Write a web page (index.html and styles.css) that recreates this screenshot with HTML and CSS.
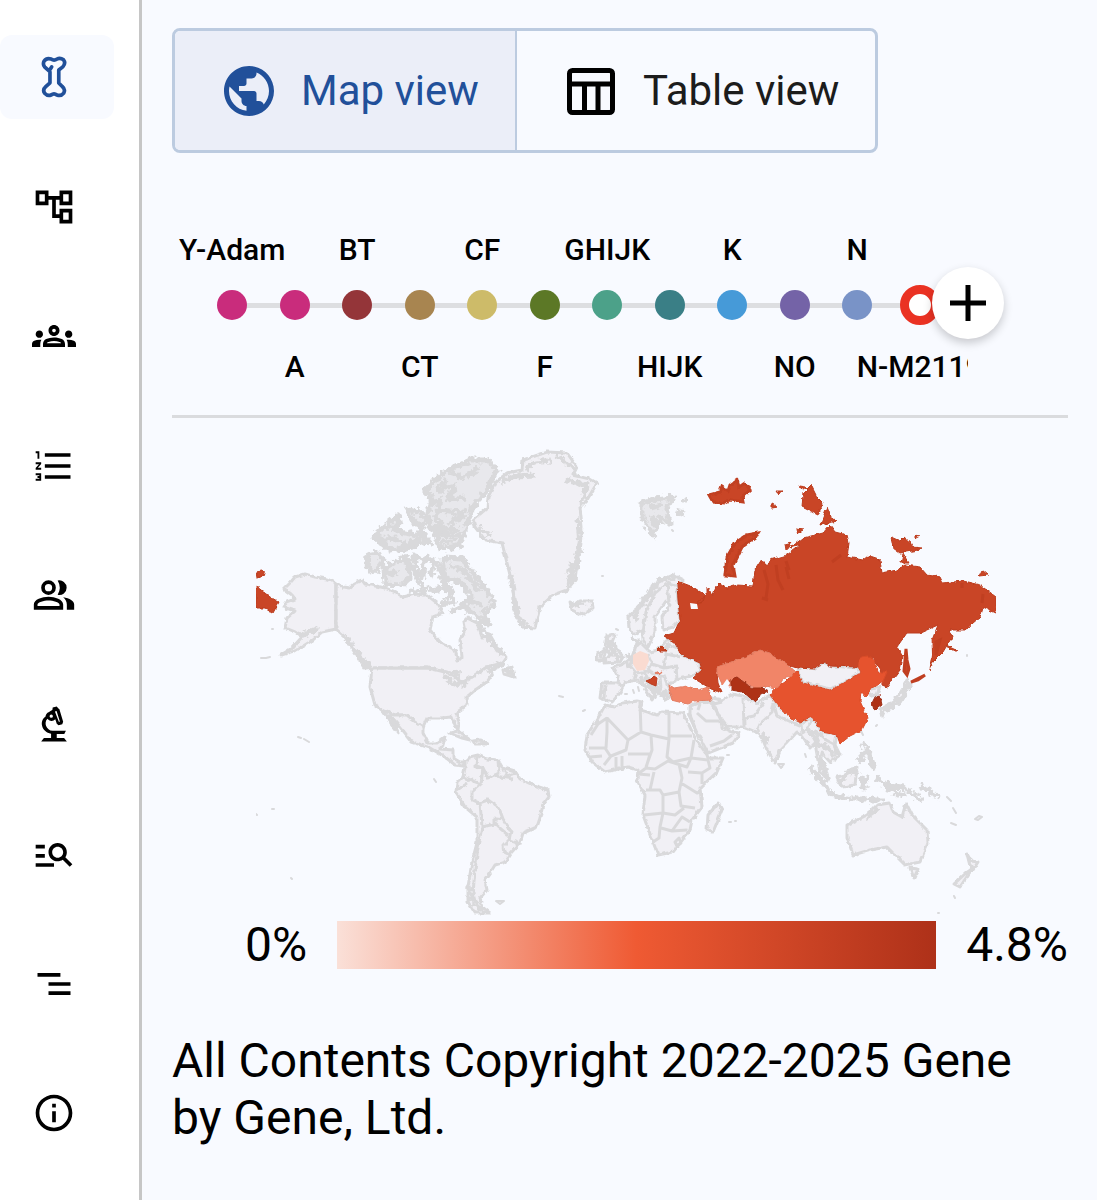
FILE: index.html
```html
<!DOCTYPE html>
<html lang="en">
<head>
<meta charset="utf-8">
<meta name="viewport" content="width=device-width, initial-scale=1">
<title>Haplogroup map</title>
<link rel="stylesheet" href="styles.css">
</head>
<body>
<div class="app">
  <nav class="rail" aria-label="Sections">
    <a class="rail-link active" href="#ancient" aria-label="Ancient connections" aria-current="page">
      <svg class="icon" viewBox="0 0 24 24" fill="none" stroke="currentColor" stroke-width="2" stroke-linejoin="round" stroke-linecap="round"><path d="M9.800 9.200V15.200L7.500 17.300Q5.600 19 6.900 20.900Q8.500 22.600 10.400 21.800Q12 20.500 13.600 21.800Q15.900 22.600 17.300 20.800Q18.400 18.700 16.500 17.200L14.600 15.300V8.200L16.800 6.500Q18.600 4.400 17.200 2.600Q15.300 1.200 13.700 2.200Q12 3.300 10.400 2.200Q8 1.400 6.600 3.300Q5.700 5.300 7 6.600L9.300 8.700 10.700 6.500"/></svg>
    </a>
    <a class="rail-link" href="#tree" aria-label="Tree">
      <svg class="icon" viewBox="0 0 24 24"><path d="M22 11V3h-7v3H9V3H2v8h7V8h2v10h4v3h7v-8h-7v3h-2V8h2v3h7zM7 9H4V5h3v4zm10 6h3v4h-3v-4zm0-10h3v4h-3V5z"/></svg>
    </a>
    <a class="rail-link" href="#groups" aria-label="Group projects">
      <svg class="icon" viewBox="0 0 24 24"><path d="M4 13c1.100 0 2-.9 2-2s-.9-2-2-2-2 .9-2 2 .9 2 2 2zm1.130 1.100C4.760 14.040 4.390 14 4 14c-.99 0-1.930.21-2.780.58C.48 14.900 0 15.620 0 16.430V18h4.500v-1.610c0-.83.23-1.610.63-2.290zM20 13c1.100 0 2-.9 2-2s-.9-2-2-2-2 .9-2 2 .9 2 2 2zm4 3.430c0-.81-.48-1.530-1.220-1.850-.85-.37-1.790-.58-2.780-.58-.39 0-.76.04-1.130.1.400.68.630 1.460.63 2.290V18H24v-1.570zM16.240 13.650c-1.170-.52-2.610-.9-4.240-.9s-3.070.39-4.240.9C6.680 14.130 6 15.210 6 16.390V18h12v-1.610c0-1.180-.68-2.260-1.760-2.740zM8.070 16c.09-.23.13-.39.91-.69.97-.38 1.990-.56 3.020-.56s2.050.18 3.020.56c.77.3.81.46.91.69H8.070zM12 8c.55 0 1 .45 1 1s-.45 1-1 1-1-.45-1-1 .45-1 1-1m0-2c-1.660 0-3 1.340-3 3s1.340 3 3 3 3-1.340 3-3-1.340-3-3-3z"/></svg>
    </a>
    <a class="rail-link" href="#list" aria-label="Ancestral path">
      <svg class="icon" viewBox="0 0 24 24"><path d="M2 17h2v.5H3v1h1v.5H2v1h3v-4H2v1zm1-9h1V4H2v1h1v3zm-1 3h1.800L2 13.100v.9h3v-1H3.200L5 10.900V10H2v1zm5-6v2h14V5H7zm0 14h14v-2H7v2zm0-6h14v-2H7v2z"/></svg>
    </a>
    <a class="rail-link" href="#people" aria-label="Notable connections">
      <svg class="icon" viewBox="0 0 24 24"><path fill-rule="evenodd" d="M9 12a4 4 0 1 0 0-8 4 4 0 0 0 0 8zm0-2a2 2 0 1 1 0-4 2 2 0 0 1 0 4zM1 20v-2.800C1 14.500 5.500 13 9 13s8 1.500 8 4.200V20zm2-2h12v-.8C15 16 11.500 15 9 15s-6 1-6 2.200zM14 11.900Q16.300 8 14 4.100a4 4 0 1 1 0 7.800zM17 13.200c3.600.5 6 2 6 4V20h-4v-2.800c0-1.700-.8-3-2-4z"/></svg>
    </a>
    <a class="rail-link" href="#science" aria-label="Scientific details">
      <svg class="icon" viewBox="0 0 24 24"><path fill-rule="evenodd" d="M10.300 4.200 11.100 3.800 11.300 2.500 13.500 1.900 14.400 3 14.900 3.300 17 10.200 16.500 11.600 14.500 12.100 13.500 11.300 12.700 8.900A2.700 2.700 0 0 1 8.400 8.600C6.300 10.700 7.700 15 11.300 15.200H18.500L17.600 16.900H13.500V19.100H17.500L19 21H5L6.500 19.100H10.400V16.800C5.400 16 3.600 10 7.400 7.400Q7.400 5.700 9.300 4.900zM10.500 6.300a.9.900 0 1 0 0 1.800.9.900 0 0 0 0-1.800zM12.500 4.600 14.700 10.300 15.200 10.100 13.400 4.300z"/></svg>
    </a>
    <a class="rail-link" href="#search" aria-label="Search details">
      <svg class="icon" viewBox="0 0 24 24"><path d="M7 9H2V7h5v2zm0 3H2v2h5v-2zm13.590 7l-3.830-3.830c-.8.520-1.740.83-2.760.83-2.760 0-5-2.240-5-5s2.240-5 5-5 5 2.240 5 5c0 1.020-.31 1.960-.83 2.750L22 17.590 20.590 19zM17 11c0-1.650-1.350-3-3-3s-3 1.350-3 3 1.350 3 3 3 3-1.350 3-3zM2 19h10v-2H2v2z"/></svg>
    </a>
    <a class="rail-link" href="#timeline" aria-label="Time tree">
      <svg class="icon" viewBox="0 0 24 24"><path d="M3 6h12.500v2H3zM9 11h12v2H9zM9 16h12v2H9z"/></svg>
    </a>
    <a class="rail-link" href="#about" aria-label="About">
      <svg class="icon" viewBox="0 0 24 24"><path d="M11 7h2v2h-2zm0 4h2v6h-2zm1-9C6.480 2 2 6.480 2 12s4.480 10 10 10 10-4.480 10-10S17.520 2 12 2zm0 18c-4.410 0-8-3.590-8-8s3.590-8 8-8 8 3.590 8 8-3.590 8-8 8z"/></svg>
    </a>
  </nav>

  <main class="content">
    <div class="view-toggle" role="group" aria-label="View">
      <button class="view-button selected" type="button" aria-pressed="true">
        <svg class="view-icon" viewBox="0 0 24 24"><path d="M12 2C6.480 2 2 6.480 2 12s4.480 10 10 10 10-4.480 10-10S17.520 2 12 2zm-1 17.930c-3.950-.49-7-3.850-7-7.930 0-.62.08-1.210.21-1.790L9 15v1c0 1.100.9 2 2 2v1.930zm6.900-2.540c-.26-.81-1-1.390-1.900-1.390h-1v-3c0-.55-.45-1-1-1H8v-2h2c.55 0 1-.45 1-1V7h2c1.100 0 2-.9 2-2v-.41c2.930 1.190 5 4.060 5 7.410 0 2.080-.8 3.970-2.100 5.390z"/></svg>
        Map view
      </button>
      <button class="view-button" type="button" aria-pressed="false">
        <svg class="view-icon" viewBox="0 0 60 60" fill="none" stroke="#000" stroke-width="5"><rect x="8.500" y="9.500" width="43" height="42" rx="3"/><path d="M8 23h44M23.500 23v28M37 23v28"/></svg>
        Table view
      </button>
    </div>

    <section class="path" aria-label="Haplogroup path">
      <ol class="steps">
        <li class="step"><span class="label">Y-Adam</span><span class="dot" style="background:#c92c7c"></span></li>
        <li class="step below"><span class="label">A</span><span class="dot" style="background:#c92c7c"></span></li>
        <li class="step"><span class="label">BT</span><span class="dot" style="background:#943539"></span></li>
        <li class="step below"><span class="label">CT</span><span class="dot" style="background:#a88550"></span></li>
        <li class="step"><span class="label">CF</span><span class="dot" style="background:#cdbb69"></span></li>
        <li class="step below"><span class="label">F</span><span class="dot" style="background:#5c7826"></span></li>
        <li class="step"><span class="label">GHIJK</span><span class="dot" style="background:#4ca189"></span></li>
        <li class="step below"><span class="label">HIJK</span><span class="dot" style="background:#3a7f86"></span></li>
        <li class="step"><span class="label">K</span><span class="dot" style="background:#469ad8"></span></li>
        <li class="step below"><span class="label">NO</span><span class="dot" style="background:#7463a7"></span></li>
        <li class="step"><span class="label">N</span><span class="dot" style="background:#7993c7"></span></li>
        <li class="step below"><span class="label">N-M2119</span><span class="dot current"></span></li>
      </ol>
      <button class="add" type="button" aria-label="Add haplogroup">
        <svg class="add-icon" viewBox="0 0 38 38" stroke="#000" stroke-width="5"><path d="M19 1v36M1 19h36"/></svg>
      </button>
    </section>

    <section class="chart">
      <svg class="map" viewBox="256 448 740 468" role="img" aria-label="World map of haplogroup frequency">
        <defs>
          <filter id="coast" x="-5%" y="-5%" width="110%" height="110%">
            <feTurbulence type="fractalNoise" baseFrequency="0.22" numOctaves="2" seed="4"/>
            <feDisplacementMap in="SourceGraphic" scale="9" xChannelSelector="R" yChannelSelector="G"/>
          </filter>
          <filter id="shore" x="-5%" y="-5%" width="110%" height="110%">
            <feTurbulence type="fractalNoise" baseFrequency="0.2" numOctaves="2" seed="8"/>
            <feDisplacementMap in="SourceGraphic" scale="4" xChannelSelector="R" yChannelSelector="G"/>
          </filter>
        </defs>

        <g class="land" filter="url(#shore)">
          <!-- Alaska -->
          <path d="M336 583L327 579 315 577 305 574 295 577 290 583 284 589 292 595 295 599 287 602 283 607 295 611 287 618 285 628 295 632 302 637 292 648 281 655 295 651 313 640 322 632 336 629z"/>
          <!-- Canada -->
          <path d="M336 583L343 587 349 588 355 583 362 580 365 584 372 585 385 588 395 592 403 597 415 594 427 595 437 603 443 613 433 617 430 630 440 642 455 650 458 661 462 657 460 640 465 632 463 622 467 618 477 623 482 637 490 635 497 647 507 657 503 663 487 667 475 675 462 683 449 673 428 668H374L366 669 355 653 345 637 336 629z"/>
          <!-- United States -->
          <path d="M372 668H428L449 673 462 683 475 675 487 667 493 673 487 682 475 690 467 697 467 705 456 713 459 722 458 730 455 725 452 717 440 718 427 718 423 727 413 720 407 715 395 715 383 711 375 705 370 687z"/>
          <!-- Mexico and Central America -->
          <path d="M383 711L395 715 407 715 413 720 423 727 423 733 428 743 437 743 445 737 443 745 440 749 453 750 453 758 460 762 465 762 463 766 455 765 445 757 430 748 412 742 405 733 396 722 390 715 398 733 392 725z"/>
          <path d="M450 733L458 731 470 740 462 738zM473 741L480 740 487 744 475 744zM503 670L512 667 514 677 504 674z"/>
          <!-- South America -->
          <path d="M465 762L470 757 478 755 487 759 498 760 502 767 515 771 520 779 533 785 548 790 549 797 543 805 540 818 537 827 523 833 520 843 510 854 505 862 495 865 490 873 485 880 487 890 480 898 482 907 490 913 475 913 468 902 468 887 472 862 477 843 477 817 465 807 456 792 457 783 463 777 465 767z"/>
          <path class="line" d="M477 756L476 766 483 768 481 784 463 777M457 790L468 783M481 784L472 792 472 800 479 803 488 800 499 808 503 819 511 831 509 840 520 844M480 803L482 827 478 847 475 870 473 893 476 904M482 827L495 824 495 818 504 819M495 824L508 835M509 840L503 846 504 852 510 855M483 768L488 778 499 773 498 760M503 767L507 776 516 773M495 776L513 779"/>
          <!-- Greenland -->
          <path d="M473 520L487 508 488 497 495 483 507 473 522 470 523 460 547 452 567 453 577 467 573 475 590 479 597 483 587 500 580 507 582 527 580 543 577 563 575 580 567 590 553 595 540 607 535 628 523 627 515 613 513 587 508 567 502 543 485 540 475 527z"/>
          <path d="M570 602L575 605 580 601 592 601 593 608 582 615 572 610z"/>
          <!-- Western Europe -->
          <path d="M613 667L621 665 632 657 638 640 643 645 650 652 658 650 667 640 675 640 682 655 700 663 700 672 687 677 677 680 668 685 670 697 665 700 660 690 652 683 645 677 653 688 655 695 652 700 645 688 638 680 625 682 620 693 612 702 600 698 602 683 617 683 618 677z"/>
          <path class="line" d="M617 683L625 686M605 685L604 698M632 657L630 666 636 673 634 679M636 673L648 671 652 664 648 654M652 664L664 668 666 654 680 657M664 668L676 666 677 680M655 674L664 676 668 686M648 671L655 674M664 650L668 644 677 648M668 645L666 654M643 671L650 681 660 684M660 676L661 690M628 668L627 662M640 676L646 688"/>
          <!-- Scandinavia -->
          <path d="M628 617L642 605 652 587 662 580 673 575 683 580 677 590 680 620 673 627 663 630 662 617 670 605 666 601 655 617 655 632 648 647 643 640 642 630 633 635 629 627z"/>
          <path class="line" d="M643 632L646 612 655 593 667 583M667 583L669 602M667 583L678 587"/>
          <path d="M607 635L615 635 612 642 623 657 620 662 603 663 610 655 605 647zM598 653L606 650 603 660 597 660z"/>
          <!-- Africa -->
          <path d="M605 705L615 707 622 703 637 701 642 702 640 710 657 715 662 712 683 713 688 723 695 738 707 755 708 758 723 758 717 772 700 788 702 807 692 820 690 830 680 843 673 852 658 855 653 842 643 815 645 795 637 780 638 770 628 767 605 772 592 762 585 750 587 735 598 718z"/>
          <!-- Arabia -->
          <path d="M690 706L698 703 712 702 720 716 722 727 732 732 740 733 733 743 708 753 697 733 690 715z"/>
          <!-- Iran to Indochina -->
          <path d="M708 697L722 700 732 694 743 696 757 703 770 695 780 708 800 722 812 717 822 732 837 734 835 745 840 755 830 762 822 753 820 762 828 779 820 772 815 743 810 748 803 737 797 732 787 743 780 750 775 763 767 750 763 740 758 733 743 727 727 727 720 718 712 702z"/>
          <path class="line" d="M743 698L744 726M744 718L754 716 764 702M757 731L761 722 772 712 774 703M774 705L777 716 800 726 805 720M802 724L803 734M812 718L808 728 816 742M818 733L826 740 834 744 836 753M820 745L830 748M780 765L782 768"/>
          <!-- Mongolia, Korea, Japan -->
          <path d="M797 670L803 667 815 669 823 662 830 666 858 668 860 672 843 683 830 689 803 682z"/>
          <path d="M868 690L880 687 877 695 871 696z"/>
          <path d="M907 680L911 685 905 690 905 697 895 705 885 709 882 717 880 709 893 702 901 692z"/>
          <!-- Oceania -->
          <path d="M847 825L867 815 877 805 890 803 893 812 902 817 906 803 912 815 927 830 928 843 920 862 905 865 897 857 887 847 870 850 853 855 847 837zM910 868L918 869 914 878z"/>
          <path d="M967 854L971 861 978 862 973 870 970 866zM972 869L960 887 954 884 966 873z"/>
          <path d="M718 803L722 810 713 832 707 830 708 815z"/>
          <path d="M837 777L845 775 857 767 855 785 842 787z"/>
        </g>

        <path class="line" d="M336 583V629M378 668H430"/>
        <path class="line" d="M688 713L697 733M607 718L598 724 591 735M607 717V732L606 748 589 748M607 718L628 740 641 732 640 702M628 740L626 750 611 756 604 765M641 732L651 735 669 739V713M670 736H692M669 739L667 757 673 762 691 758 694 740M651 735L652 750 646 767M628 754L650 754 646 768 638 774M646 768L655 769 668 761 687 767 691 758M691 758L708 760 710 768 702 773 688 772M679 764L682 778 679 792 663 795 660 790H646M650 790L654 772M702 773L702 784M681 783L697 793 700 792M679 792L681 806 695 808M663 795V813L644 815M663 813L675 815 684 808M663 813L660 827 659 838 653 842M661 828L672 831 682 817 690 822M672 831L687 830M675 842L679 838 681 843 677 846zM605 748L611 757M590 757L602 756M616 757V770M622 756V768M638 774L650 775"/>
        <path class="line" d="M697 713L706 721 719 721M710 746L724 741 732 735M700 704L698 710M714 704L722 702"/>

        <!-- Arctic archipelago and other rugged islands -->
        <g class="rugged" filter="url(#coast)">
          <path d="M425 490L443 473 470 460 488 460 497 470 487 490 472 508 468 523 462 540 448 534 432 530 427 513 432 500z"/>
          <path class="trace" d="M435 490L455 485 448 500 465 498M438 510L460 512 450 525M450 470L462 478 480 468M428 505L440 500 436 520 446 530M446 478L440 492M458 522L466 510"/>
          <path d="M373 537L385 526 400 532 415 535 426 540 412 547 390 550zM388 523L398 515 400 524 392 528zM407 510L420 512 430 524 414 524zM435 535L460 536 460 546 440 548z"/>
          <path class="trace" d="M430 528L460 530M418 530L432 545M378 540L395 538 405 545 420 540M412 518L424 530M376 533L385 546M441 542L455 541"/>
          <path d="M368 555L378 553 384 561 374 573 367 567zM384 568L400 560 409 562 410 578 402 585 385 584zM443 558L462 559 475 575 492 598 494 605 484 612 488 624 476 616 462 606 472 596 460 582 445 578z"/>
          <path class="trace" d="M414 556L424 560 423 577 416 570zM426 556L434 562 430 578M438 562L442 580 452 590 446 600M430 590L445 588 455 602 440 604M409 590L425 592M450 565L465 572 480 592M386 575L398 572M412 564L420 584 428 590M404 556L412 562M470 600L482 606M462 606L450 612"/>
          <path class="trace" d="M345 637L355 650 370 668M300 636L318 628M487 672L505 662M443 675L455 685 466 683M388 715L398 730M505 668L512 675M448 672L460 674M478 622L490 640 502 655"/>
          <path d="M642 503L655 499 673 497 667 508 670 523 660 518 653 536 642 517z"/>
          <path class="trace" d="M675 511L684 513M682 500L688 500M650 508L662 505M652 515L656 526"/>
          <path class="trace" d="M633 622L638 608 650 592 660 580 675 577M511 575L514 600 520 620 528 627M578 520L580 545 573 578 567 588M525 470L535 462 550 460M500 482L515 476 535 475M566 480L588 486M469 885L472 900 484 911M572 562L568 582M586 486L582 505M478 528L492 536M556 456L575 468M575 604L585 603"/>
          <path class="trace" d="M810 768L818 776 832 795M832 795L850 799 873 799M838 784L848 773 858 770M860 777L870 779M862 779L866 788M863 742L868 752 874 770M865 752L858 762M822 760L828 782M875 778L887 785 903 787 913 794 923 801M885 790L905 795M920 785L932 793 940 797M822 745L836 757M806 730L822 735M870 800L885 800M866 818L878 808M812 770L826 786M815 735L820 748M888 785L900 796M864 782L862 790"/>
          <path class="trace" d="M607 636L613 652 620 661M626 655L636 662M652 683L664 698M633 637L640 645M606 645L616 644M600 655L604 655M885 710L898 703 905 694 907 683M645 678L655 692M664 690L668 700M762 732L768 744"/>
        </g>
        <path class="speck" d="M298 737l3 1zM304 739l5 3zM261 658l4 0zM266 658l4-1zM272 629l1 0zM256 814l1 1zM272 809l2 0zM291 878l1 1zM434 779l2 3zM496 901l8 0-4 3zM559 696l4 1zM583 711l2-1zM604 649l0-1zM602 576l1 0zM616 629l2 1zM729 822l2 0zM735 821l1 0zM947 797l4 4zM953 808l3 5zM975 819l4-3 3 1-4 3zM951 823l5 2zM954 896l1 2zM938 913l1 0zM967 655l0 1zM778 764l3 4 3-4zM861 731l2 4zM876 726l1-1zM727 755l2 0zM805 754l1 3zM672 530l1 1zM633 690l1 3zM638 687l1 4zM625 694l2 0zM690 707l2 2z"/>

        <!-- Shaded countries -->
        <path class="tone-high" filter="url(#shore)" d="M680 582L693 587 705 595 703 602 695 605 707 594 707 587 713 595 716 587 720 583 727 588 737 585 753 586 755 570 762 559 767 567 770 560 787 555 800 545 790 548 803 538 823 533 830 525 835 532 847 535 849 543 847 557 863 560 868 556 880 560 882 573 897 570 905 565 920 567 927 575 940 577 943 583 963 581 980 585 996 597 996 613 983 607 980 617 965 630 950 630 952 637 943 652 933 662 930 670 932 657 932 640 938 625 920 633 907 633 897 647 903 657 900 670 887 687 882 685 883 673 873 658 860 657 858 667 830 666 823 662 815 669 797 668 787 665 770 653 760 650 745 657 717 667 717 673 718 683 722 693 713 690 693 678 702 670 700 663 682 655 674 642 664 636 674 633 680 620 678 600 677 585z"/>
        <path class="tone-high thick" filter="url(#shore)" d="M758 533L755 538 742 547 733 565 735 576 725 575 727 557 735 543 747 535zM709 495L720 492 722 487 728 491 730 485 737 480 739 487 745 483 750 490 742 497 743 502 730 500 724 503 713 502z"/>
        <path class="tone-high" filter="url(#shore)" d="M776 491L782 491 778 494zM772 504L778 507 772 508zM811 485L817 497 823 503 818 515 802 507 803 493zM800 486L806 487 802 490zM827 507L831 517 837 521 820 525zM796 529L803 530 798 533zM785 544L792 542 786 550zM891 537L900 541 904 537 911 543 913 547 922 548 918 550 900 553 893 548zM916 535L920 536 916 538zM903 553L909 563 901 563zM982 570L988 575 979 576zM946 645L957 650 950 650zM256 586L270 597 279 602 273 613 265 608 256 608zM256 572L262 571 265 575 257 578zM657 651L662 646 667 651z"/>
        <path class="tone-mid" filter="url(#shore)" d="M858 667L860 657 868 656 875 661 878 672 887 672 883 681 872 688 865 697 861 692 860 701 864 710 868 718 862 730 850 736 840 744 837 735 822 732 812 717 800 722 790 717 780 708 770 695 776 688 785 682 797 670 803 683 830 690 843 683 861 672z"/>
        <path class="tone-low" filter="url(#shore)" d="M717 667L745 657 760 650 770 653 787 665 795 671 790 677 783 679 778 688 765 686 757 689 745 683 737 677 731 680 730 686 722 684 717 673zM668 685L675 688 687 686 699 690 708 687 712 700 695 701 688 704 672 700zM655 674L662 671 659 675z"/>
        <path class="tone-top" filter="url(#shore)" d="M731 679L737 677 745 683 752 688 762 688 768 691 760 695 755 702 743 692 731 690zM875 697L880 695 882 704 874 710 872 703z"/>
        <path class="tone-high" d="M646 681L651 679 654 676 657 678 656 686 651 684z"/>
        <path class="tone-faint" d="M633 655L640 651 648 654 649 661 645 670 637 671 633 664z"/>
        <path class="sea" d="M690 603l7 1 1 5-7 0zM722 686l5-7 3 4-3 5 2 10-5-4zM897 648l10-14 24 1 1 20-5 18-14 7-5-33z"/>
        <path class="tone-high thick" d="M906 649L907 660 909 669 907 675 904 671zM911 682L925 675 918 680zM936 642L940 640 936 655z"/>
        <path class="inlet" d="M764 570l4 14-2 14M776 565l2 15 5 10M786 567l3 12M832 562l9-7M768 600l-6-2M962 583v5M983 594l-1 9M789 570l-3-9"/>
      </svg>

      <div class="legend">
        <span>0%</span>
        <span class="scale"></span>
        <span>4.8%</span>
      </div>
    </section>

    <footer class="copyright">All Contents Copyright 2022-2025 Gene by Gene, Ltd.</footer>
  </main>
</div>
</body>
</html>
```
FILE: styles.css
```css
* {
  box-sizing: border-box;
}

body {
  margin: 0;
  background: #f8faff;
  color: #000;
  font-family: Roboto, "Liberation Sans", sans-serif;
}

button {
  font: inherit;
  cursor: pointer;
}

.app {
  display: flex;
  min-height: 100vh;
}

.rail {
  flex: none;
  display: flex;
  flex-direction: column;
  justify-content: space-between;
  gap: 24px;
  width: 142px;
  padding: 35px 25px 45px 0;
  background: #fff;
  border-right: 3px solid #c6c6c6;
}

.rail-link {
  display: flex;
  align-items: center;
  height: 84px;
  padding-left: 32px;
  border-radius: 12px;
  color: #000;
}

.rail-link.active {
  background: #f8faff;
  color: #21509a;
}

.icon {
  width: 44px;
  height: 44px;
  fill: currentColor;
}

.active .icon {
  fill: none;
}

.content {
  flex: 1;
  min-width: 0;
  padding: 28px 29px 40px 30px;
}

.view-toggle {
  display: inline-flex;
  vertical-align: top;
  border: 3px solid #bccbe0;
  border-radius: 8px;
  overflow: hidden;
}

.view-button {
  display: flex;
  align-items: center;
  gap: 22px;
  height: 119px;
  padding: 0 36px 0 44px;
  border: 0;
  background: transparent;
  color: #1c1c1c;
  font-size: 42px;
  white-space: nowrap;
}

.view-button.selected {
  border-right: 2px solid #bccbe0;
  background: #ebeef8;
  color: #21509a;
}

.view-icon {
  width: 60px;
  height: 60px;
}

.selected .view-icon {
  fill: currentColor;
}

.path {
  position: relative;
  margin-top: 76px;
  padding-bottom: 20px;
  border-bottom: 3px solid #dadbde;
}

.steps {
  display: grid;
  grid-template-columns: repeat(12, minmax(0, 1fr));
  margin: 0 100px 0 0;
  padding: 0 17px 0 29px;
  list-style: none;
  overflow: hidden;
}

.step {
  position: relative;
  display: grid;
  grid-template-rows: 42px 68px 56px;
  justify-content: center;
  justify-items: center;
  align-items: center;
  font-size: 30px;
  font-weight: 500;
  line-height: 42px;
}

.step + .step::before {
  content: "";
  position: absolute;
  top: 74px;
  right: 50%;
  width: 100%;
  height: 5px;
  background: #dddee1;
}

.label {
  grid-row: 1;
  white-space: nowrap;
}

.below .label {
  grid-row: 3;
}

.dot {
  position: relative;
  z-index: 1;
  grid-row: 2;
  width: 30px;
  height: 30px;
  border-radius: 50%;
}

.dot.current {
  width: 40px;
  height: 40px;
  border: 9px solid #ea3223;
  background: #fff;
}

.add {
  position: absolute;
  z-index: 2;
  top: 38px;
  right: 64px;
  display: grid;
  place-items: center;
  width: 72px;
  height: 72px;
  padding: 0;
  border: 0;
  border-radius: 50%;
  background: #fff;
  box-shadow: 0 4px 10px rgba(0, 0, 0, 0.2);
}

.add-icon {
  width: 38px;
  height: 38px;
}

.chart {
  padding-top: 30px;
}

.map {
  display: block;
  width: calc(100% - 156px);
  height: auto;
  margin-left: 84px;
}

.land path,
.rugged path,
.line,
.speck {
  fill: #f1f0f5;
  stroke: #d9d9db;
  stroke-width: 3;
  stroke-linejoin: round;
}

.land .line,
.line {
  fill: none;
}

.rugged path {
  fill: #e8e8ec;
  stroke-width: 5;
}

.rugged .trace {
  fill: none;
}

.speck {
  stroke-width: 2;
}

.tone-faint {
  fill: #fadbd1;
}

.tone-low {
  fill: #f18568;
  stroke: #e27d63;
}

.tone-mid {
  fill: #e6532e;
  stroke: #d94c29;
}

.tone-high {
  fill: #c94425;
  stroke: #bb3c1f;
}

.tone-high.thick {
  stroke: #c03f21;
  stroke-width: 3;
}

.tone-top {
  fill: #ae3319;
  stroke: #9f3019;
}

.sea {
  fill: #f8faff;
}

.inlet {
  fill: none;
  stroke: #c03f21;
  stroke-width: 3;
}

.legend {
  display: flex;
  align-items: center;
  gap: 30px;
  margin: 5px 0 0 73px;
  font-size: 48px;
  line-height: 48px;
}

.scale {
  flex: 1;
  height: 48px;
  background: linear-gradient(90deg, #fae0d8, #ef5a33 50%, #ae3119);
}

.copyright {
  margin-top: 63px;
  font-size: 48px;
  line-height: 57px;
}
```
